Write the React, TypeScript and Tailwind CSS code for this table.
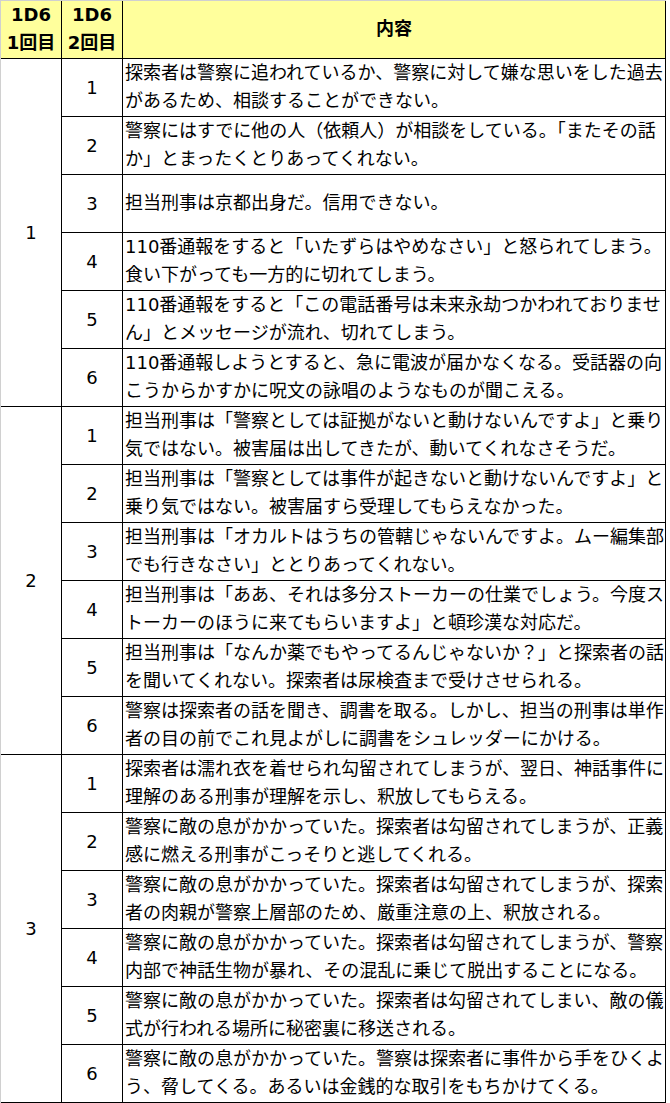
// 警察に相談できない理由 表（1D6 × 1D6）

const groups: { roll: number; rows: string[][] }[] = [
  {
    roll: 1,
    rows: [
      ["探索者は警察に追われているか、警察に対して嫌な思いをした過去", "があるため、相談することができない。"],
      ["警察にはすでに他の人（依頼人）が相談をしている。「またその話", "か」とまったくとりあってくれない。"],
      ["担当刑事は京都出身だ。信用できない。"],
      ["110番通報をすると「いたずらはやめなさい」と怒られてしまう。", "食い下がっても一方的に切れてしまう。"],
      ["110番通報をすると「この電話番号は未来永劫つかわれておりませ", "ん」とメッセージが流れ、切れてしまう。"],
      ["110番通報しようとすると、急に電波が届かなくなる。受話器の向", "こうからかすかに呪文の詠唱のようなものが聞こえる。"],
    ],
  },
  {
    roll: 2,
    rows: [
      ["担当刑事は「警察としては証拠がないと動けないんですよ」と乗り", "気ではない。被害届は出してきたが、動いてくれなさそうだ。"],
      ["担当刑事は「警察としては事件が起きないと動けないんですよ」と", "乗り気ではない。被害届すら受理してもらえなかった。"],
      ["担当刑事は「オカルトはうちの管轄じゃないんですよ。ムー編集部", "でも行きなさい」ととりあってくれない。"],
      ["担当刑事は「ああ、それは多分ストーカーの仕業でしょう。今度ス", "トーカーのほうに来てもらいますよ」と頓珍漢な対応だ。"],
      ["担当刑事は「なんか薬でもやってるんじゃないか？」と探索者の話", "を聞いてくれない。探索者は尿検査まで受けさせられる。"],
      ["警察は探索者の話を聞き、調書を取る。しかし、担当の刑事は単作", "者の目の前でこれ見よがしに調書をシュレッダーにかける。"],
    ],
  },
  {
    roll: 3,
    rows: [
      ["探索者は濡れ衣を着せられ勾留されてしまうが、翌日、神話事件に", "理解のある刑事が理解を示し、釈放してもらえる。"],
      ["警察に敵の息がかかっていた。探索者は勾留されてしまうが、正義", "感に燃える刑事がこっそりと逃してくれる。"],
      ["警察に敵の息がかかっていた。探索者は勾留されてしまうが、探索", "者の肉親が警察上層部のため、厳重注意の上、釈放される。"],
      ["警察に敵の息がかかっていた。探索者は勾留されてしまうが、警察", "内部で神話生物が暴れ、その混乱に乗じて脱出することになる。"],
      ["警察に敵の息がかかっていた。探索者は勾留されてしまい、敵の儀", "式が行われる場所に秘密裏に移送される。"],
      ["警察に敵の息がかかっていた。警察は探索者に事件から手をひくよ", "う、脅してくる。あるいは金銭的な取引をもちかけてくる。"],
    ],
  },
];

export default function App() {
  return (
    <div className="w-[670px] h-[1103px] bg-white text-black overflow-hidden font-['DejaVu_Sans','Noto_Sans_CJK_JP',sans-serif] text-[18px] leading-[28px]">
      <div className="w-[666px] border-l border-t border-[#d0d0d0]">
        {/* header */}
        <div className="flex h-[58px] bg-[#ffff9c] font-bold">
          <div className="w-[61px] border-r border-b border-black flex flex-col items-center justify-center pb-[1px]">
            <span>1D6</span>
            <span>1回目</span>
          </div>
          <div className="w-[61px] border-r border-b border-black flex flex-col items-center justify-center pb-[1px]">
            <span>1D6</span>
            <span>2回目</span>
          </div>
          <div className="w-[543px] border-r border-b border-black flex items-center justify-center pb-[2px]">
            内容
          </div>
        </div>

        {groups.map((g) => (
          <div key={g.roll} className="flex">
            <div className="w-[61px] border-r border-b border-black flex items-center justify-center">
              {g.roll}
            </div>
            <div className="flex flex-col">
              {g.rows.map((lines, i) => (
                <div key={i} className="flex h-[58px]">
                  <div className="w-[61px] border-r border-b border-black flex items-center justify-center">
                    {i + 1}
                  </div>
                  <div className="w-[543px] border-r border-b border-black pl-[2px] pb-[2px] flex flex-col justify-center whitespace-nowrap overflow-hidden">
                    {lines.map((t, j) => (
                      <span key={j}>{t}</span>
                    ))}
                  </div>
                </div>
              ))}
            </div>
          </div>
        ))}
      </div>
    </div>
  );
}
